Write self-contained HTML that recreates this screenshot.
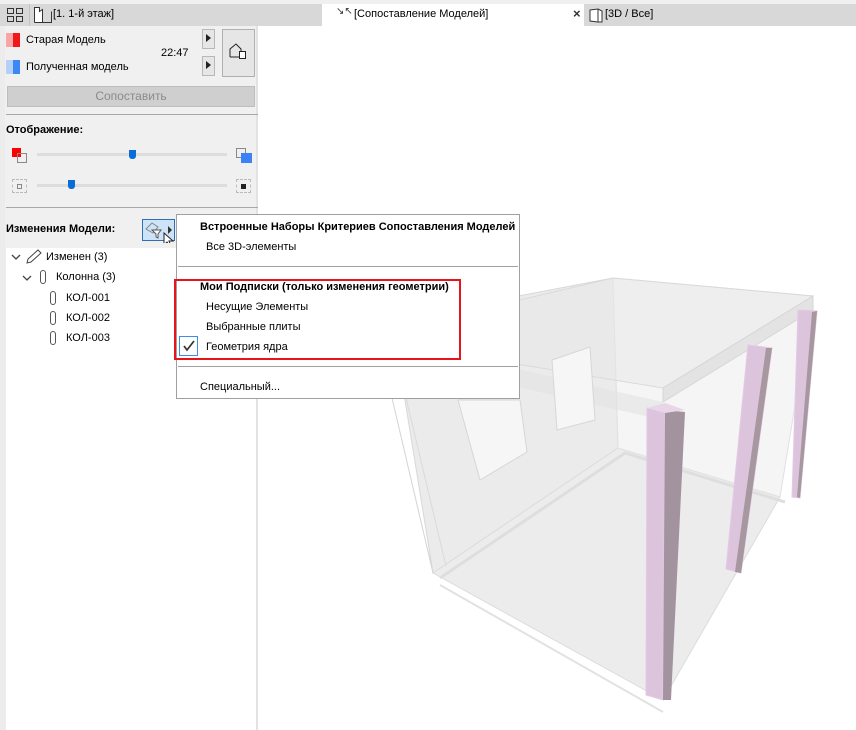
<!DOCTYPE html>
<html><head><meta charset="utf-8"><style>
*{margin:0;padding:0;box-sizing:border-box}
body{width:856px;height:730px;overflow:hidden;background:#fff;font-family:"Liberation Sans",sans-serif;font-size:11px;color:#000;position:relative}
.a{position:absolute;white-space:nowrap}
.b{font-weight:bold}
</style></head><body>
<!-- 3D view -->
<svg class="a" style="left:0;top:0" width="856" height="730">
<polygon points="392,320 613,278 618,448 433,573" fill="#ebebeb" stroke="#d8d8d8"/>
<polygon points="433,573 618,448 780,497 663,700" fill="#ececec" stroke="#dcdcdc"/>
<polygon points="613,278 813,296 780,497 618,448" fill="#f5f5f5" stroke="#e0e0e0"/>
<polyline points="440,578 625,453 785,502" fill="none" stroke="#dedede" stroke-width="3"/>
<polyline points="440,585 663,712" fill="none" stroke="#e2e2e2" stroke-width="2"/>
<polygon points="392,330 613,278 813,296 663,388 400,345" fill="#e8e8e8" fill-opacity="0.5" stroke="#dadada"/>
<polygon points="663,388 813,296 813,310 663,402" fill="#e3e3e3" stroke="#d6d6d6"/>
<polygon points="500,365 663,402 663,420 500,383" fill="#e2e2e2" fill-opacity="0.6"/>
<polygon points="552,360 590,347 595,420 557,430" fill="#f6f6f6" stroke="#d6d6d6"/>
<polygon points="458,400 520,400 527,452 480,480" fill="#f6f6f6" stroke="#d6d6d6"/>
<line x1="392" y1="398" x2="433" y2="573" stroke="#d4d4d4"/>
<line x1="406" y1="398" x2="446" y2="566" stroke="#dadada"/>
<!-- columns -->
<polygon points="798,310 817,311 800,498 792,497" fill="#dcc5dc" stroke="#e5c8e5"/>
<polygon points="812,312 817,311 800,498 797,497" fill="#a7979f"/>
<polygon points="748,345 772,348 741,573 726,569" fill="#dcc5dc" stroke="#e5c8e5"/>
<polygon points="766,348 772,348 741,573 735,572" fill="#a7979f"/>
<polygon points="647,408 665,410 663,700 646,695" fill="#dcc5dc" stroke="#e5c8e5"/>
<polygon points="665,410 685,412 671,700 663,700" fill="#a3939f"/>
<polygon points="647,408 665,403 685,410 665,413" fill="#e8d6e8"/>
</svg>
<!-- top strip / tabs -->
<div class="a" style="left:0;top:0;width:856px;height:4px;background:#f0f0f0"></div>
<div class="a" style="left:0;top:4px;width:856px;height:22px;background:#d8d8d8"></div>
<div class="a" style="left:0;top:4px;width:30px;height:22px;border-right:1px solid #c4c4c4"></div>
<svg class="a" style="left:7px;top:8px" width="17" height="15"><g fill="none" stroke="#333"><rect x="0.5" y="0.5" width="6" height="5"/><rect x="9.5" y="0.5" width="6" height="5"/><rect x="0.5" y="8.5" width="6" height="5"/><rect x="9.5" y="8.5" width="6" height="5"/></g></svg>
<svg class="a" style="left:34px;top:7px" width="18" height="16"><path d="M0.5,15.5V0.5H5.5V4.5L8.5,2.5V15.5H17.5" fill="#fff" stroke="#333"/><path d="M0.5,15.5H17.5V4.5" fill="none" stroke="#333"/></svg>
<div class="a" style="left:53px;top:8px">[1. 1-й этаж]</div>
<div class="a" style="left:322px;top:4px;width:262px;height:22px;background:#fff"></div>
<div class="a" style="left:336px;top:6px;font-size:10px;color:#333">↘↖</div>
<div class="a" style="left:354px;top:8px">[Сопоставление Моделей]</div>
<div class="a" style="left:573px;top:6px;font-size:13px;font-weight:bold;color:#333">×</div>
<svg class="a" style="left:589px;top:8px" width="14" height="15"><path d="M1,2 L9,1 L13,3 L13,14 L9,14 L1,13Z M9,1 V14" fill="#fff" stroke="#333"/></svg>
<div class="a" style="left:605px;top:8px">[3D / Все]</div>
<!-- left panel -->
<div class="a" style="left:0;top:26px;width:258px;height:704px;background:#fff;border-right:2px solid #e2e2e2"></div>
<div class="a" style="left:0;top:26px;width:6px;height:704px;background:#ececec"></div>
<div class="a" style="left:5px;top:26px;width:251px;height:222px;background:#f0f0f0"></div>
<div class="a" style="left:6px;top:33px;width:7px;height:14px;background:#f8a5a5"></div>
<div class="a" style="left:13px;top:33px;width:7px;height:14px;background:#f01818"></div>
<div class="a" style="left:26px;top:34px">Старая Модель</div>
<div class="a" style="left:6px;top:60px;width:7px;height:14px;background:#b5d0f5"></div>
<div class="a" style="left:13px;top:60px;width:7px;height:14px;background:#3d86f5"></div>
<div class="a" style="left:26px;top:61px">Полученная модель</div>
<div class="a" style="left:161px;top:47px">22:47</div>
<div class="a" style="left:202px;top:29px;width:13px;height:20px;background:#e6e6e6;border:1px solid #b8b8b8"></div>
<div class="a" style="left:206px;top:34px;width:0;height:0;border-left:5px solid #222;border-top:4px solid transparent;border-bottom:4px solid transparent"></div>
<div class="a" style="left:202px;top:56px;width:13px;height:20px;background:#e6e6e6;border:1px solid #b8b8b8"></div>
<div class="a" style="left:206px;top:61px;width:0;height:0;border-left:5px solid #222;border-top:4px solid transparent;border-bottom:4px solid transparent"></div>
<div class="a" style="left:222px;top:29px;width:33px;height:48px;background:#e6e6e6;border:1px solid #b0b0b0"></div>
<svg class="a" style="left:229px;top:43px" width="20" height="18"><path d="M1,14V6L7,1L12,6V14H1" fill="none" stroke="#222"/><rect x="10.5" y="8.5" width="6" height="7" fill="#fff" stroke="#222"/></svg>
<div class="a" style="left:7px;top:86px;width:248px;height:21px;background:#cfcfcf;border:1px solid #bdbdbd;color:#8a8a8a;text-align:center;line-height:19px;font-size:12px">Сопоставить</div>
<div class="a" style="left:6px;top:114px;width:252px;height:1px;background:#a8a8a8"></div>
<div class="a b" style="left:6px;top:124px">Отображение:</div>
<div class="a" style="left:12px;top:148px;width:9px;height:9px;background:#f00"></div>
<div class="a" style="left:17px;top:153px;width:10px;height:10px;border:1px solid #888"></div>
<div class="a" style="left:37px;top:153px;width:190px;height:3px;background:#ddd"></div>
<div class="a" style="left:129px;top:150px;width:7px;height:9px;background:#0a6cd6;border-radius:0 0 3px 3px"></div>
<div class="a" style="left:236px;top:148px;width:10px;height:10px;border:1px solid #888"></div>
<div class="a" style="left:241px;top:153px;width:11px;height:10px;background:#3b82f6"></div>
<div class="a" style="left:12px;top:179px;width:15px;height:14px;border:1px dashed #bbb"></div>
<div class="a" style="left:17px;top:184px;width:5px;height:5px;border:1px solid #888"></div>
<div class="a" style="left:37px;top:184px;width:190px;height:3px;background:#ddd"></div>
<div class="a" style="left:68px;top:180px;width:7px;height:9px;background:#0a6cd6;border-radius:0 0 3px 3px"></div>
<div class="a" style="left:236px;top:179px;width:15px;height:14px;border:1px dashed #bbb"></div>
<div class="a" style="left:241px;top:184px;width:5px;height:5px;background:#222"></div>
<div class="a" style="left:6px;top:207px;width:252px;height:1px;background:#a8a8a8"></div>
<div class="a b" style="left:6px;top:223px">Изменения Модели:</div>
<div class="a" style="left:142px;top:219px;width:33px;height:22px;background:#cde3f7;border:1px solid #2f6fb3"></div>
<svg class="a" style="left:144px;top:221px" width="30" height="22"><path d="M2,8L8,2L14,6L9,12Z" fill="none" stroke="#888"/><path d="M8,9H17L14,13V17L12,16V13Z" fill="#fff" stroke="#555"/><path d="M24,5L28,9L24,13Z" fill="#333"/><path d="M20,12V24L23,21L26,26L27,25L25,20H29Z" fill="#fff" stroke="#222"/></svg>
<!-- tree -->
<svg class="a" style="left:11px;top:253px" width="10" height="8"><path d="M1,2L5,6L9,2" fill="none" stroke="#444" stroke-width="1.3"/></svg>
<svg class="a" style="left:25px;top:249px" width="18" height="16"><path d="M2,14L3,10L13,1L16,4L6,13Z" fill="#fff" stroke="#444"/></svg>
<div class="a" style="left:46px;top:251px">Изменен (3)</div>
<svg class="a" style="left:22px;top:274px" width="10" height="8"><path d="M1,2L5,6L9,2" fill="none" stroke="#444" stroke-width="1.3"/></svg>
<div class="a" style="left:40px;top:270px;width:6px;height:14px;border:1px solid #555;border-radius:3px"></div>
<div class="a" style="left:56px;top:271px">Колонна (3)</div>
<div class="a" style="left:50px;top:291px;width:6px;height:14px;border:1px solid #555;border-radius:3px"></div>
<div class="a" style="left:66px;top:292px">КОЛ-001</div>
<div class="a" style="left:50px;top:311px;width:6px;height:14px;border:1px solid #555;border-radius:3px"></div>
<div class="a" style="left:66px;top:312px">КОЛ-002</div>
<div class="a" style="left:50px;top:331px;width:6px;height:14px;border:1px solid #555;border-radius:3px"></div>
<div class="a" style="left:66px;top:332px">КОЛ-003</div>
<!-- menu -->
<div class="a" style="left:176px;top:214px;width:344px;height:185px;background:#fff;border:1px solid #a0a0a0"></div>
<div class="a b" style="left:200px;top:221px">Встроенные Наборы Критериев Сопоставления Моделей</div>
<div class="a" style="left:206px;top:241px">Все 3D-элементы</div>
<div class="a" style="left:178px;top:266px;width:340px;height:1px;background:#a0a0a0"></div>
<div class="a" style="left:174px;top:279px;width:287px;height:81px;border:2px solid #e8141c"></div>
<div class="a b" style="left:200px;top:281px">Мои Подписки (только изменения геометрии)</div>
<div class="a" style="left:206px;top:301px">Несущие Элементы</div>
<div class="a" style="left:206px;top:321px">Выбранные плиты</div>
<div class="a" style="left:179px;top:336px;width:19px;height:20px;border:1px solid #3d8ee6;background:#fff"></div>
<svg class="a" style="left:182px;top:339px" width="14" height="14"><path d="M2,7L5,11L12,2" fill="none" stroke="#333" stroke-width="1.7"/></svg>
<div class="a" style="left:206px;top:341px">Геометрия ядра</div>
<div class="a" style="left:178px;top:366px;width:340px;height:1px;background:#a0a0a0"></div>
<div class="a" style="left:200px;top:381px">Специальный...</div>
</body></html>
